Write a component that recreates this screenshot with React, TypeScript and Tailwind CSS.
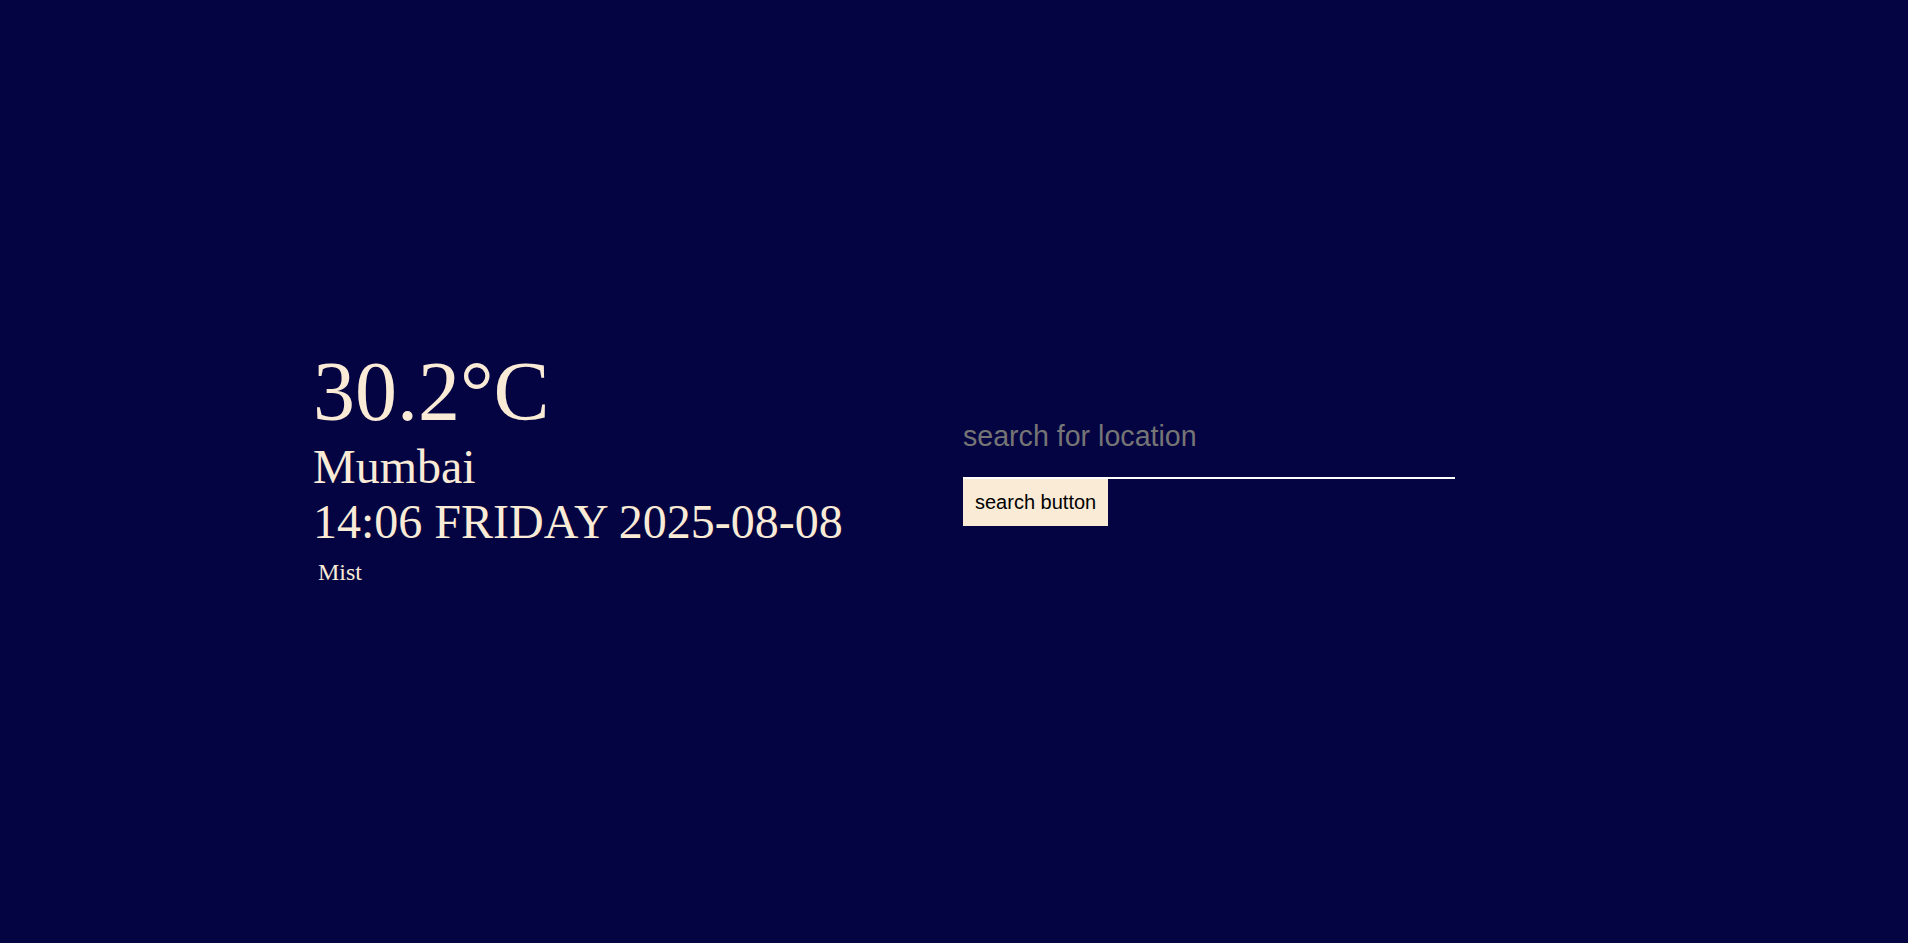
import React from 'react';

const weather = {
  temp: '30.2°C',
  city: 'Mumbai',
  time: '14:06 FRIDAY 2025-08-08',
  condition: 'Mist',
};

export default function App() {
  return (
    <div className="min-h-screen w-full bg-[#050443] flex items-center pl-[313px]">
      <div className="w-[650px] mb-[11px] text-[#faebd7] font-['Liberation_Serif',serif]">
        <h1 className="text-[84px] font-normal leading-[1.12]">{weather.temp}</h1>
        <h2 className="text-[48px] font-normal leading-[1.15]">{weather.city}</h2>
        <h3 className="text-[48px] font-normal leading-[1.15]">{weather.time}</h3>
        <p className="text-[24px] leading-[1.15] mt-[10px] pl-[5px]">{weather.condition}</p>
      </div>
      <div className="mb-[22px] flex flex-col items-start font-['Liberation_Sans',Arial,sans-serif]">
        <input
          type="text"
          placeholder="search for location"
          className="w-[492px] pt-[25px] pb-[24px] px-0 bg-transparent text-[28.6px] leading-[1.15] text-[#faebd7] placeholder:text-[#757575] border-b-2 border-white outline-none"
        />
        <button className="bg-[#faebd7] text-black text-[20px] leading-[1.15] px-[12px] py-[12px]">
          search button
        </button>
      </div>
    </div>
  );
}
